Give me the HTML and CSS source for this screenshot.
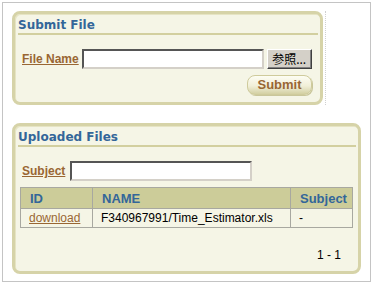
FILE: index.html
```html
<!DOCTYPE html>
<html>
<head>
<meta charset="utf-8">
<link rel="stylesheet" href="styles.css">
</head>
<body>
<div class="frame">
  <div class="toprow">
    <div class="panel panel-submit">
      <div class="title">Submit File</div>
      <div class="field">
        <a class="label label-tight" href="#">File Name</a>
        <span class="input"></span>
        <span class="browse">参照...</span>
      </div>
      <div class="actions">
        <span class="submit">Submit</span>
      </div>
    </div>
    <div class="edge"></div>
  </div>
  <div class="panel panel-files">
    <div class="title">Uploaded Files</div>
    <div class="field">
      <a class="label" href="#">Subject</a>
      <span class="input"></span>
    </div>
    <table class="grid">
      <thead>
        <tr><th class="c-id">ID</th><th class="c-name">NAME</th><th class="c-subj">Subject</th></tr>
      </thead>
      <tbody>
        <tr><td><a class="link" href="#">download</a></td><td>F340967991/Time_Estimator.xls</td><td>-</td></tr>
      </tbody>
    </table>
    <div class="pager">1 - 1</div>
  </div>
</div>
</body>
</html>
```
FILE: styles.css
```css
html, body {
  margin: 0;
  padding: 0;
  background: #ffffff;
}
body {
  padding: 2px 0 0 2px;
  font-family: "Liberation Sans", Arial, sans-serif;
  font-size: 12px;
  color: #000;
}
.frame {
  box-sizing: border-box;
  width: 369px;
  height: 280px;
  border: 1px solid #c4c4c4;
  padding: 8px 0 0 9px;
}
.toprow {
  display: flex;
  align-items: stretch;
}
.edge {
  margin-left: 2px;
  border-left: 1px dotted #d0d0d0;
}
.panel {
  box-sizing: border-box;
  background: #f5f5e6;
  border: 3px solid #d6d3a8;
  border-radius: 8px;
  box-shadow: inset 1px 1px 0 #e6e4c4;
}
.panel-submit {
  width: 311px;
  height: 94px;
}
.panel-files {
  width: 349px;
  height: 151px;
  margin-top: 18px;
}
.title {
  margin: 0 2px 0 3px;
  padding-top: 4px;
  line-height: 15px;
  font-family: "DejaVu Sans", Verdana, sans-serif;
  font-weight: bold;
  font-size: 12px;
  color: #336699;
  border-bottom: 2px solid #d2cf9f;
}
.field {
  display: flex;
  align-items: center;
  margin-top: 14px;
  padding-left: 7px;
}
.label {
  font-weight: bold;
  font-size: 12px;
  color: #996633;
  text-decoration: underline;
  margin-right: 5px;
}
.label-tight {
  margin-right: 3px;
}
.input {
  box-sizing: border-box;
  width: 182px;
  height: 20px;
  background: #fff;
  border: 2px solid;
  border-color: #555555 #d4d0c8 #d4d0c8 #555555;
}
.browse {
  box-sizing: border-box;
  width: 45px;
  height: 20px;
  margin-left: 3px;
  background: #d4d0c8;
  border: 1px solid;
  border-color: #ffffff #404040 #404040 #ffffff;
  box-shadow: inset -1px -1px 0 #808080;
  font-family: "Noto Sans CJK JP", "Liberation Sans", sans-serif;
  font-size: 12px;
  line-height: 17px;
  text-align: center;
  color: #000;
}
.actions {
  display: flex;
  justify-content: flex-end;
  margin-top: 6px;
  padding-right: 8px;
}
.submit {
  box-sizing: border-box;
  width: 65px;
  height: 20px;
  border: 1px solid #cfcb9c;
  border-radius: 8px;
  background: linear-gradient(#fdfdf3, #f1efd8 55%, #d3d0a2);
  box-shadow: 1px 1px 0 #c9c69a;
  font-weight: bold;
  font-size: 13px;
  line-height: 18px;
  text-align: center;
  color: #996633;
}
.grid {
  border-collapse: collapse;
  margin: 6px 0 0 5px;
  width: 333px;
}
.grid th, .grid td {
  border: 1px solid #a8a8a0;
  text-align: left;
  padding: 0 0 0 9px;
}
.grid th {
  background: #cccc99;
  color: #336699;
  font-weight: bold;
  font-size: 13px;
  height: 20px;
}
.grid td {
  height: 18px;
  font-size: 12px;
  padding-left: 8px;
}
.c-id { width: 62px; }
.c-name { width: 188px; }
.link {
  color: #996633;
  text-decoration: underline;
}
.pager {
  margin-top: 20px;
  padding-right: 17px;
  text-align: right;
  line-height: 14px;
}
```
